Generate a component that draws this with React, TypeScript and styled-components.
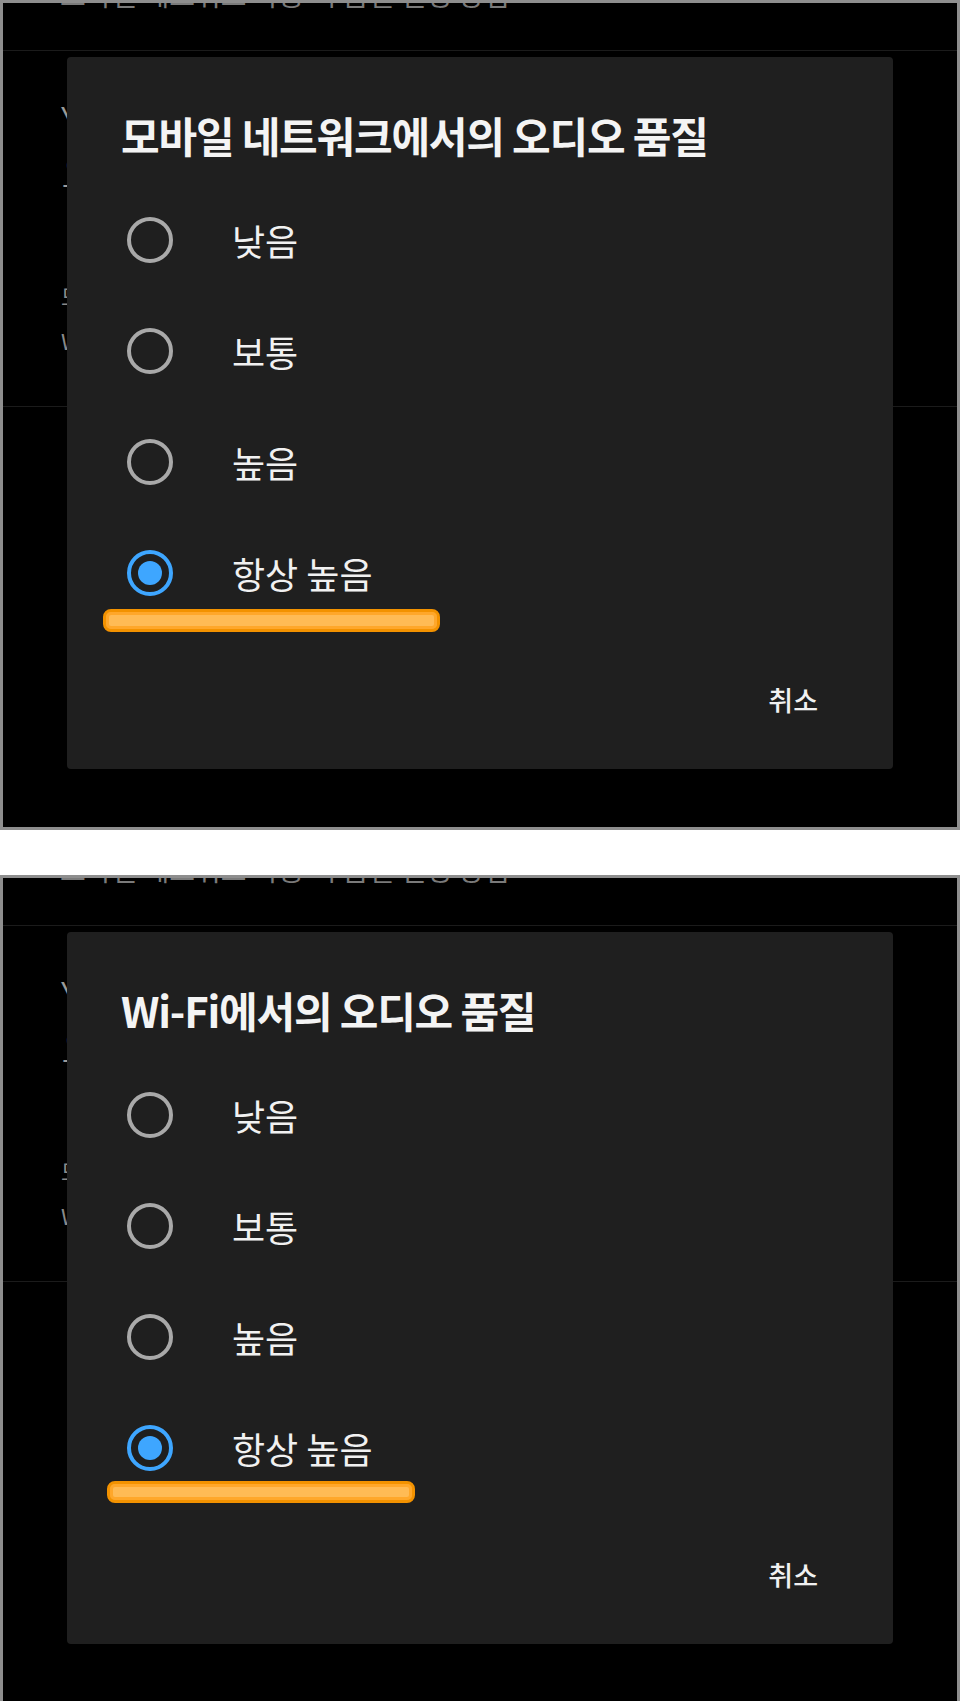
import React from "react";
import styled, { createGlobalStyle } from "styled-components";

const GlobalStyle = createGlobalStyle`
  html, body {
    margin: 0;
    padding: 0;
    background: #ffffff;
  }
  body {
    font-family: "Noto Sans CJK KR", "Noto Sans", sans-serif;
  }
`;

const options = ["낮음", "보통", "높음", "항상 높음"];

type Mark = { top: number; left: number; width: number; height: number };

const shots: { title: string; mark: Mark }[] = [
  {
    title: "모바일 네트워크에서의 오디오 품질",
    mark: { top: 552, left: 36, width: 337, height: 23 },
  },
  {
    title: "Wi-Fi에서의 오디오 품질",
    mark: { top: 549, left: 40, width: 308, height: 22 },
  },
];

export default function App() {
  return (
    <>
      <GlobalStyle />
      <Page>
        {shots.map((shot) => (
          <Frame key={shot.title}>
            <TopBar>
              <TopText>모바일 네트워크 사용 시 음질 설정 방법</TopText>
            </TopBar>
            <Section>
              <BigText>
                YouTube Music
                <br />
                오디오 품질
              </BigText>
              <SubText>모바일 네트워크에서의 오디오 품질</SubText>
              <SubText>Wi-Fi에서의 오디오 품질</SubText>
            </Section>

            <Dialog>
              <Title>{shot.title}</Title>
              <List>
                {options.map((label, i) => (
                  <Row key={label}>
                    <Radio $checked={i === options.length - 1} />
                    <Label>{label}</Label>
                  </Row>
                ))}
              </List>
              <Footer>
                <Cancel>취소</Cancel>
              </Footer>
              <Highlight
                style={{
                  top: shot.mark.top,
                  left: shot.mark.left,
                  width: shot.mark.width,
                  height: shot.mark.height,
                }}
              />
            </Dialog>
          </Frame>
        ))}
      </Page>
    </>
  );
}

const Page = styled.div`
  display: flex;
  flex-direction: column;
  gap: 45px;
  width: 960px;
`;

const Frame = styled.div`
  position: relative;
  box-sizing: border-box;
  width: 960px;
  height: 830px;
  border: 3px solid #8e8e8e;
  background: #000000;
  overflow: hidden;
`;

const TopBar = styled.div`
  height: 47px;
  padding-left: 57px;
  border-bottom: 1px solid #1b1b1b;
  overflow: hidden;
`;

const TopText = styled.div`
  margin-top: -24px;
  font-size: 28px;
  line-height: 30px;
  color: #7a7a7a;
  white-space: nowrap;
`;

const Section = styled.div`
  box-sizing: border-box;
  height: 356px;
  padding: 44px 0 0 58px;
  border-bottom: 1px solid #1b1b1b;
`;

const BigText = styled.div`
  font-size: 44px;
  line-height: 50px;
  font-weight: 300;
  color: #9a9a9a;
  margin-bottom: 78px;
`;

const SubText = styled.div`
  font-size: 22px;
  line-height: 45px;
  color: #8a8a8a;
`;

const Dialog = styled.div`
  position: absolute;
  top: 54px;
  left: 64px;
  box-sizing: border-box;
  width: 826px;
  height: 712px;
  padding-top: 49px;
  background: #1f1f1f;
  border-radius: 4px;
  display: flex;
  flex-direction: column;
`;

const Title = styled.div`
  padding-left: 54px;
  font-size: 42px;
  line-height: 58px;
  font-weight: 700;
  letter-spacing: -1.2px;
  color: #f4f4f4;
  white-space: nowrap;
`;

const List = styled.div`
  margin-top: 20px;
  display: flex;
  flex-direction: column;
`;

const Row = styled.div`
  height: 111px;
  padding-left: 60px;
  display: flex;
  align-items: center;
  gap: 59px;
`;

const Radio = styled.span<{ $checked?: boolean }>`
  position: relative;
  box-sizing: border-box;
  width: 46px;
  height: 46px;
  flex: none;
  border-radius: 50%;
  border: 4px solid ${(p) => (p.$checked ? "#3ea6ff" : "#a9a9a9")};

  &::after {
    content: "";
    display: ${(p) => (p.$checked ? "block" : "none")};
    position: absolute;
    top: 7px;
    left: 7px;
    width: 24px;
    height: 24px;
    border-radius: 50%;
    background: #3ea6ff;
  }
`;

const Label = styled.span`
  font-size: 36px;
  line-height: 44px;
  color: #f1f1f1;
`;

const Footer = styled.div`
  margin-top: 52px;
  padding-right: 75px;
  display: flex;
  justify-content: flex-end;
`;

const Cancel = styled.button`
  padding: 0;
  border: none;
  background: none;
  font-family: inherit;
  font-size: 27px;
  line-height: 40px;
  font-weight: 500;
  color: #f1f1f1;
`;

const Highlight = styled.div`
  position: absolute;
  box-sizing: border-box;
  border: 3px solid #f39200;
  border-radius: 8px;
  background: #ffbb55;
  box-shadow: inset 0 0 0 3px #ffa72a;
`;
